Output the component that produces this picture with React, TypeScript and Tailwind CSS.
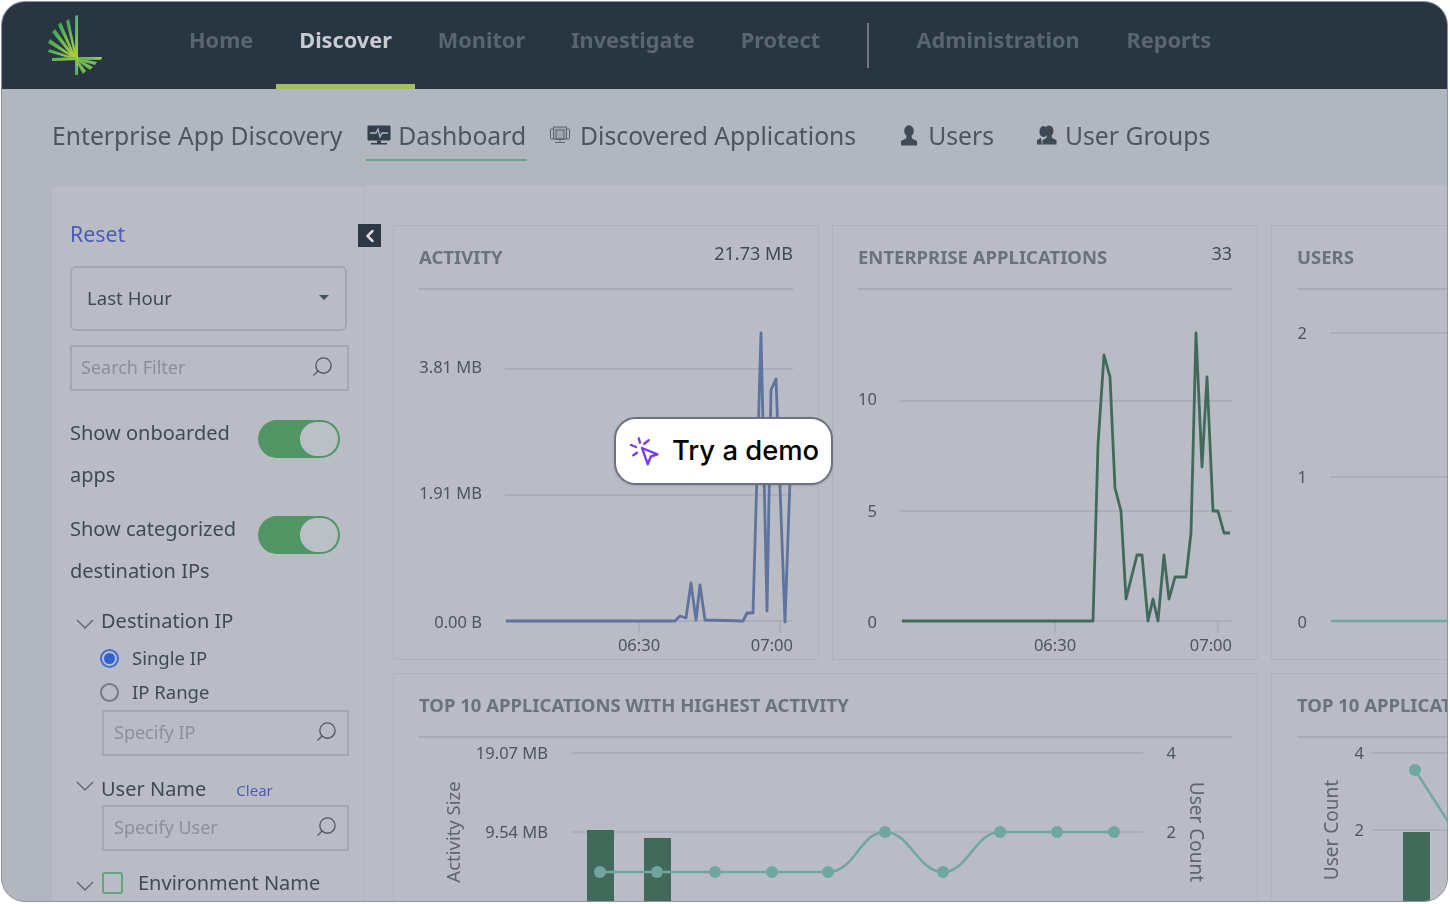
import { type FC, type ReactNode } from "react";
import { ChevronLeft, Search } from "lucide-react";

const navItems = ["Home", "Discover", "Monitor", "Investigate", "Protect"];
const adminItems = ["Administration", "Reports"];

const GRID = "#a7abb6";
const LABEL = "#4c5560";
const TEAL = "#6fa79f";
const DARK_GREEN = "#426a5b";

const activity =
  "506,621 675,621 680,616 686,618 691,583 696,620 700,585 705,620 743,621 747,613 753,613 761,333 767,611 771,390 776,379 785,622 790,480 792,440";
const apps =
  "902,621 1093,621 1098,445 1104,355 1110,377 1115,488 1121,511 1126,599 1137,555 1142,555 1148,621 1153,599 1158,621 1164,555 1169,599 1175,577 1186,577 1191,533 1196,333 1202,467 1207,377 1213,511 1218,511 1224,533 1230,533";

const dots: [number, number][] = [
  [600, 872],
  [657, 872],
  [715, 872],
  [772, 872],
  [828, 872],
  [885, 832],
  [943, 872],
  [1000, 832],
  [1057, 832],
  [1114, 832],
];

const Logo = () => (
  <svg width="56" height="64" viewBox="48 14 56 64" className="shrink-0">
    <defs>
      <linearGradient id="up" x1="0" y1="0" x2="0.8" y2="1">
        <stop offset="0" stopColor="#35a558" />
        <stop offset="1" stopColor="#b2cf45" />
      </linearGradient>
      <linearGradient id="down" x1="0" y1="1" x2="1" y2="0">
        <stop offset="0" stopColor="#35a558" />
        <stop offset="1" stopColor="#b2cf45" />
      </linearGradient>
    </defs>
    <g fill="url(#up)">
      <polygon points="75,16 78,15 78,58 75,58" />
      <polygon points="66,21 69,19 77,58 75,58" />
      <polygon points="58,25 61,22 76,58 74,58" />
      <polygon points="52,32 55,29 76,58 74,59" />
      <polygon points="48,43 50,39 76,58 75,59" />
      <polygon points="48,52 49,49 76,58 76,60" />
      <polygon points="52,58 76,57 78,60 52,61" />
    </g>
    <g fill="url(#down)">
      <polygon points="78,57 102,57 101,60 78,60" />
      <polygon points="76,58 97,62 95,65 76,60" />
      <polygon points="76,58 93,67 90,70 76,60" />
      <polygon points="76,58 86,71 83,74 75,60" />
      <polygon points="75,58 78,58 78,75 75,75" />
    </g>
  </svg>
);

const DashboardIcon = () => (
  <svg width="24" height="22" viewBox="0 0 24 22">
    <rect x="0.5" y="0.5" width="23" height="15" rx="1" fill="#333f4b" />
    <path d="M3 8h6l2-4 2 8 2-4h6" fill="none" stroke="#b0b6be" strokeWidth="1.3" />
    <rect x="10" y="15.5" width="4" height="3" fill="#333f4b" />
    <rect x="4" y="18" width="16" height="1.5" fill="#333f4b" />
  </svg>
);

const DiscoveredIcon = () => (
  <svg width="20" height="19" viewBox="0 0 20 19" fill="none" stroke="#5b6470" strokeWidth="1">
    <rect x="0.5" y="3" width="19" height="10" rx="1" />
    <rect x="3.5" y="1" width="13" height="12" fill="#a0a6af" />
    <rect x="6" y="4" width="8" height="9" />
    <path d="M10 13v3M5 16.500h10" />
  </svg>
);

const UserIcon = () => (
  <svg width="18" height="21" viewBox="0 0 18 21" fill="#3f4a56">
    <ellipse cx="9" cy="6" rx="4.800" ry="5.800" />
    <path d="M6.500 11 6 13.500 1 16v4.500h16V16l-5-2.500-.5-2.500z" />
  </svg>
);

const UsersIcon = () => (
  <svg width="21" height="21" viewBox="0 0 21 21" fill="#3f4a56">
    <ellipse cx="7.500" cy="6.500" rx="4" ry="5.500" />
    <path d="M1 15l4-2 1 6.500H1z" />
    <ellipse cx="13" cy="6" rx="4.500" ry="5.600" />
    <path d="M10.800 10.500l-.4 2.600L6.500 15v4.500h14V15l-4.400-1.900-.4-2.600z" />
  </svg>
);

const DemoIcon = () => (
  <svg width="30" height="30" viewBox="628 435 30 30" fill="none" stroke="#7c3aed" strokeWidth="2.400" strokeLinecap="round" strokeLinejoin="round">
    <path d="M641 447l15.500 6.300-6.700 2.200-3 7.800z" />
    <path d="M637.800 437.500l1.200 4.200M630 444l5 2M632.300 454.300l3.700-2.600M643.300 442.700l4.400-3.400" />
  </svg>
);

const Chevron: FC<{ className?: string }> = ({ className }) => (
  <svg width="18" height="10" viewBox="0 0 18 10" fill="none" stroke="#5d6570" strokeWidth="1.300" className={className}>
    <path d="M1 1l8 8 8-8" />
  </svg>
);

const FilterInput: FC<{ placeholder: string; className?: string }> = ({ placeholder, className }) => (
  <div className={`flex h-[46px] items-center justify-between border-2 border-[#a3a7b1] ${className ?? ""}`}>
    <span className="-translate-y-px text-[18px] text-[#8b8f99]">{placeholder}</span>
    <Search size={23} strokeWidth={1.4} className="-scale-x-100 -translate-y-0.5 text-[#4f5863]" />
  </div>
);

const Toggle = () => (
  <div className="flex h-[38px] w-[82px] shrink-0 items-center justify-end rounded-full bg-[#519664] pr-[2px]">
    <div className="h-[34px] w-[38px] rounded-full bg-[#bbbfc6]" />
  </div>
);

const ToggleRow: FC<{ first: string; second: string }> = ({ first, second }) => (
  <div className="relative h-[84px] text-[20px] leading-[42px] text-[#3f4a56]">
    <div>{first}</div>
    <div>{second}</div>
    <div className="absolute top-[8px] right-[8px]">
      <Toggle />
    </div>
  </div>
);

const Sidebar = () => (
  <aside className="mt-[2px] flex w-[313px] shrink-0 flex-col border-r border-[#b2b6c0] bg-[#b9bcc5] pl-[18px] pr-[16px] pt-[31px]">
    <div className="text-[21.300px] leading-[32px] text-[#4a5dba]">Reset</div>
    <div className="mt-[16px] flex h-[65px] w-[277px] items-center justify-between rounded-[6px] border-2 border-[#a3a7b1] pb-[2px] pl-[15px] pr-[16px] text-[18.600px] text-[#3f4a56]">
      Last Hour
      <span className="h-0 w-0 border-x-[5px] border-t-[5px] border-x-transparent border-t-[#47515c]" />
    </div>
    <FilterInput placeholder="Search Filter" className="mt-[14px] w-[279px] pl-[9px] pr-[13px]" />
    <div className="mt-[21px]">
      <ToggleRow first="Show onboarded" second="apps" />
    </div>
    <div className="mt-[12px]">
      <ToggleRow first="Show categorized" second="destination IPs" />
    </div>
    <div className="mt-[13px] flex h-[32px] items-center text-[20px] text-[#3f4a56]">
      <Chevron className="mt-[6px] ml-[6px] mr-[7px]" />
      Destination IP
    </div>
    <div className="mt-[4px] ml-[30px] flex h-[34px] items-center gap-[13px] text-[18.500px] text-[#3f4a56]">
      <span className="flex h-[19px] w-[19px] items-center justify-center rounded-full border-2 border-[#3d6fd6]">
        <span className="h-[11px] w-[11px] rounded-full bg-[#2f62d0]" />
      </span>
      Single IP
    </div>
    <div className="ml-[30px] flex h-[34px] items-center gap-[13px] text-[18.500px] text-[#3f4a56]">
      <span className="h-[19px] w-[19px] rounded-full border-2 border-[#737a85]" />
      IP Range
    </div>
    <FilterInput placeholder="Specify IP" className="mt-px ml-[32px] w-[247px] pl-[10px] pr-[9px]" />
    <div className="mt-[17px] flex h-[32px] items-center text-[20px] text-[#3f4a56]">
      <Chevron className="-mt-[6px] ml-[6px] mr-[7px]" />
      User Name
      <span className="mt-[2px] ml-[30px] text-[15px] text-[#4a5dba]">Clear</span>
    </div>
    <FilterInput placeholder="Specify User" className="ml-[32px] w-[247px] pl-[10px] pr-[9px]" />
    <div className="mt-[20px] flex h-[24px] items-center text-[20px] text-[#3f4a56]">
      <Chevron className="mt-[6px] ml-[6px] mr-[8px]" />
      <span className="mr-[15px] h-[22px] w-[21px] rounded-[3px] border-2 border-[#62a47c]" />
      Environment Name
    </div>
  </aside>
);

const Card: FC<{ title: string; value?: string; className?: string; children: ReactNode }> = ({
  title,
  value,
  className,
  children,
}) => (
  <section className={`overflow-hidden border border-[#aeb2bc] bg-[#b9bcc5] ${className ?? ""}`}>
    <div className="mx-[25px] flex h-[64px] items-start justify-between border-b-2 border-[#a7abb6]">
      <span className="mt-[17px] whitespace-nowrap text-[18.500px] font-bold text-[#6a727d]">{title}</span>
      {value ? <span className="mt-[14px] text-[18px] text-[#3f4a56]">{value}</span> : null}
    </div>
    {children}
  </section>
);

const AxisLabel: FC<{ x: number; y: number; anchor?: "start" | "middle" | "end"; children: string }> = ({
  x,
  y,
  anchor = "end",
  children,
}) => (
  <text x={x} y={y} textAnchor={anchor} fontSize="16.500" fill={LABEL}>
    {children}
  </text>
);

const GridLine: FC<{ x1: number; x2: number; y: number }> = ({ x1, x2, y }) => (
  <line x1={x1} x2={x2} y1={y} y2={y} stroke={GRID} strokeWidth="1.500" />
);

const Tick: FC<{ x: number }> = ({ x }) => <line x1={x} x2={x} y1={621} y2={633} stroke={GRID} strokeWidth="1.500" />;

const ActivityChart = () => (
  <svg width="425" height="369" viewBox="394 290 425 369" className="block">
    <GridLine x1={505} x2={793} y={369} />
    <GridLine x1={505} x2={793} y={495} />
    <GridLine x1={505} x2={793} y={621} />
    <Tick x={639} />
    <Tick x={780} />
    <AxisLabel x={482} y={373}>3.81 MB</AxisLabel>
    <AxisLabel x={482} y={499}>1.91 MB</AxisLabel>
    <AxisLabel x={482} y={628}>0.00 B</AxisLabel>
    <AxisLabel x={639} y={651} anchor="middle">06:30</AxisLabel>
    <AxisLabel x={793} y={651}>07:00</AxisLabel>
    <polyline points={activity} fill="none" stroke="#5f739f" strokeWidth="2.800" strokeLinejoin="round" />
  </svg>
);

const AppsChart = () => (
  <svg width="425" height="369" viewBox="833 290 425 369" className="block">
    <GridLine x1={900} x2={1232} y={401} />
    <GridLine x1={900} x2={1232} y={511} />
    <GridLine x1={900} x2={1232} y={621} />
    <Tick x={1055} />
    <Tick x={1218} />
    <AxisLabel x={877} y={405}>10</AxisLabel>
    <AxisLabel x={877} y={517}>5</AxisLabel>
    <AxisLabel x={877} y={628}>0</AxisLabel>
    <AxisLabel x={1055} y={651} anchor="middle">06:30</AxisLabel>
    <AxisLabel x={1232} y={651}>07:00</AxisLabel>
    <polyline points={apps} fill="none" stroke={DARK_GREEN} strokeWidth="2.800" strokeLinejoin="round" />
  </svg>
);

const UsersChart = () => (
  <svg width="300" height="369" viewBox="1272 290 300 369" className="block">
    <GridLine x1={1330} x2={1571} y={333} />
    <GridLine x1={1330} x2={1571} y={477} />
    <GridLine x1={1330} x2={1571} y={621} />
    <AxisLabel x={1307} y={339}>2</AxisLabel>
    <AxisLabel x={1307} y={483}>1</AxisLabel>
    <AxisLabel x={1307} y={628}>0</AxisLabel>
    <line x1={1331} x2={1571} y1={621} y2={621} stroke={TEAL} strokeWidth="2.500" />
  </svg>
);

const TopAppsChart = () => (
  <svg width="865" height="170" viewBox="394 738 865 170" className="block">
    <GridLine x1={572} x2={1143} y={753} />
    <GridLine x1={572} x2={1143} y={832} />
    <AxisLabel x={548} y={759}>19.07 MB</AxisLabel>
    <AxisLabel x={548} y={838}>9.54 MB</AxisLabel>
    <AxisLabel x={1176} y={759}>4</AxisLabel>
    <AxisLabel x={1176} y={838}>2</AxisLabel>
    <text x={460} y={832} transform="rotate(-90 460 832)" textAnchor="middle" fontSize="18.500" fill="#5d6570">
      Activity Size
    </text>
    <text x={1190} y={832} transform="rotate(90 1190 832)" textAnchor="middle" fontSize="19" fill="#5d6570">
      User Count
    </text>
    <rect x={587} y={830} width={27} height={80} fill={DARK_GREEN} />
    <rect x={644} y={838} width={27} height={80} fill={DARK_GREEN} />
    <path
      d="M600 872L828 872C855 872 860 832 885 832C910 832 918 872 943 872C968 872 975 832 1000 832L1114 832"
      fill="none"
      stroke={TEAL}
      strokeWidth="2.500"
    />
    {dots.map(([cx, cy]) => (
      <circle key={cx} cx={cx} cy={cy} r="6" fill={TEAL} />
    ))}
  </svg>
);

const TopUsersChart = () => (
  <svg width="300" height="170" viewBox="1272 738 300 170" className="block">
    <GridLine x1={1371} x2={1571} y={753} />
    <GridLine x1={1371} x2={1571} y={830} />
    <AxisLabel x={1364} y={759}>4</AxisLabel>
    <AxisLabel x={1364} y={836}>2</AxisLabel>
    <text x={1338} y={830} transform="rotate(-90 1338 830)" textAnchor="middle" fontSize="19" fill="#5d6570">
      User Count
    </text>
    <rect x={1403} y={832} width={27} height={80} fill={DARK_GREEN} />
    <path d="M1415 770L1460 840" fill="none" stroke={TEAL} strokeWidth="2.500" />
    <circle cx={1415} cy={770} r="6" fill={TEAL} />
  </svg>
);

export default function App() {
  return (
    <div className="h-[904px] w-[1450px] overflow-hidden bg-white p-px font-['Noto_Sans','Open_Sans',sans-serif]">
      <div className="relative h-[901px] w-[1447px] overflow-hidden rounded-[24px] border border-[#8f949c] bg-[#b1b6bf]">
        <div className="relative flex h-full flex-col blur-[0.5px]">
          <header className="flex h-[87px] shrink-0 items-center bg-[#293642] pl-[46px]">
            <Logo />
            <nav className="ml-[62px] flex h-full items-stretch text-[21.700px] font-bold text-[#59656f]">
              {navItems.map((item) => (
                <a
                  key={item}
                  className={
                    item === "Discover"
                      ? "flex items-center border-b-[5px] border-[#a4bf57] px-[23px] pb-[6px] text-[#c8ccd2]"
                      : "flex items-center border-b-[5px] border-transparent px-[23px] pb-[6px]"
                  }
                >
                  {item}
                </a>
              ))}
              <span className="ml-[24px] mr-[25px] my-[21px] w-[1.500px] bg-[#6e7880]" />
              <div className="flex gap-px">
                {adminItems.map((item) => (
                  <a key={item} className="flex items-center border-b-[5px] border-transparent px-[23px] pb-[6px]">
                    {item}
                  </a>
                ))}
              </div>
            </nav>
          </header>
          <div className="flex h-[96px] shrink-0 items-center pb-[2px] pl-[50px] text-[24.700px] text-[#4c5560]">
            <span>Enterprise App Discovery</span>
            <span className="relative ml-[24px] flex items-center gap-[7px] pr-px pl-px">
              <DashboardIcon />
              Dashboard
              <span className="absolute inset-x-0 -bottom-[6px] h-[2px] bg-[#65a67d]" />
            </span>
            <span className="ml-[23px] flex items-center gap-[10px]">
              <DiscoveredIcon />
              Discovered Applications
            </span>
            <span className="ml-[44px] flex items-center gap-[10px]">
              <UserIcon />
              Users
            </span>
            <span className="ml-[42px] flex items-center gap-[8px]">
              <UsersIcon />
              User Groups
            </span>
          </div>
          <div className="flex min-h-0 flex-1 pl-[50px]">
            <Sidebar />
            <main className="min-w-0 flex-1 overflow-hidden bg-[#b9bcc5] pl-[28px] pt-[40px]">
              <div className="grid w-[1178px] grid-cols-[426px_426px_300px] grid-rows-[435px_260px] gap-[13px]">
                <Card title="ACTIVITY" value="21.73 MB">
                  <ActivityChart />
                </Card>
                <Card title="ENTERPRISE APPLICATIONS" value="33">
                  <AppsChart />
                </Card>
                <Card title="USERS">
                  <UsersChart />
                </Card>
                <Card title="TOP 10 APPLICATIONS WITH HIGHEST ACTIVITY" className="col-span-2">
                  <TopAppsChart />
                </Card>
                <Card title="TOP 10 APPLICATIONS WITH HIGHEST USERS">
                  <TopUsersChart />
                </Card>
              </div>
            </main>
          </div>
          <button className="absolute top-[222px] left-[356px] flex h-[23px] w-[23px] items-center justify-center bg-[#2c3843] text-[#d5d8dc]">
            <ChevronLeft size={20} strokeWidth={3} />
          </button>
        </div>
        <button className="absolute top-[415px] left-[612px] flex h-[68px] w-[219px] items-center gap-[13px] rounded-[22px] border-2 border-[#6b7280] bg-white pl-[13px] font-['Inter',sans-serif] text-[27.400px] font-medium text-black shadow-sm">
          <DemoIcon />
          Try a demo
        </button>
      </div>
    </div>
  );
}
